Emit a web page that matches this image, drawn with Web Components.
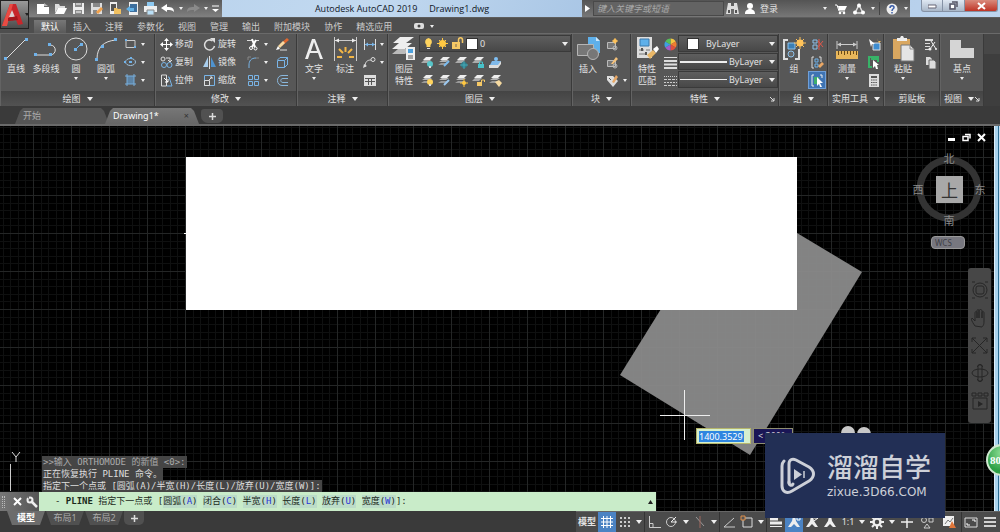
<!DOCTYPE html>
<html lang="zh-CN">
<head>
<meta charset="utf-8">
<title>Autodesk AutoCAD 2019 - Drawing1.dwg</title>
<style>
html,body{margin:0;height:100%;background:#000;overflow:hidden}
body{font:9px/12px "Noto Sans","Noto Sans CJK SC",sans-serif;color:#e2e2e2}
</style>
</head>
<body>
<cad-app></cad-app>
<script>
const LAYERS = '<path d="M5 1h7l-3 3H2z" fill="#eee"/><path d="M3 4h7l-3 3H0z" fill="#aaa"/>';
const SHEETS = '<path d="M5 1h7l-3 3H2z" fill="#eee"/><path d="M4 4h7l-3 2H1z" fill="#b5b5b5"/><path d="M3 7h7l-3 2H0z" fill="#999"/>';
const ICONS = {
  line:[26,26,'<path d="M3 23 23 3" stroke="#ddd"/><path d="M1 21h3v3H1zM22 2h3v3h-3z" fill="#6fb2ea"/>'],
  pline:[26,26,'<path d="M2 19h15c7 0 7-10 0-10" stroke="#ddd" fill="none"/><path d="M1 17h3v3H1zM16 17h3v3h-3zM15 7h3v3h-3z" fill="#6fb2ea"/>'],
  circle:[26,26,'<circle cx="13" cy="13" r="11" stroke="#ddd" fill="none"/><path d="m13 13 5-5" stroke="#6fb2ea"/><path d="M11 12h3v3h-3zM17 7h3v3h-3z" fill="#6fb2ea"/>'],
  arc:[26,26,'<path d="M4 23C4 11 11 5 23 4" stroke="#ddd" fill="none"/><path d="M2 22h3v3H2zM8 9h3v3H8zM21 2h3v3h-3z" fill="#6fb2ea"/>'],
  rect:[13,12,'<path d="M2 2.500h9v7H2z" stroke="#ccc" fill="none"/><path d="M1 1h2v2H1zM10 8h2v2h-2z" fill="#6fb2ea"/>'],
  ellipse:[13,12,'<ellipse cx="6.500" cy="6" rx="5" ry="3.500" stroke="#9cc0dc" fill="none"/><path d="M5 5h3v2H5zM6 1h2v2H6zM0 5h2v2H0z" fill="#6fb2ea"/>'],
  hatch:[13,12,'<path d="M3 2h7v8H3z" fill="#5d84a6"/><path d="M1 2h11M1 10h11M3 0v12M10 0v12" stroke="#79aedb"/>'],
  move:[13,13,'<path d="M6.500 1v11M1 6.500h11" stroke="#fff"/><path d="m6.500 0 2.500 3H4zM6.500 13 4 10h5zM0 6.500 3 4v5zM13 6.500 10 4v5z" fill="#fff"/>'],
  rotate:[13,13,'<path d="M9.500 2.800A5 5 0 1 0 11.500 8" stroke="#ddd" stroke-width="1.500" fill="none"/><path d="M7 0h5v5z" fill="#ddd"/>'],
  copy:[13,13,'<circle cx="3" cy="3" r="2" stroke="#ddd" fill="none"/><circle cx="4" cy="9" r="2.500" stroke="#79b4e6" fill="none"/><circle cx="9.500" cy="9" r="2.500" stroke="#79b4e6" fill="none"/><path d="M6 2h4v3m-2-1 2 2 2-2" stroke="#ddd" fill="none"/>'],
  mirror:[13,13,'<path d="M5 1v10H0z" fill="#a9cdec"/><path d="M8 1v10h5z" fill="#4f93cf"/><path d="M6.500 0v13" stroke="#ddd"/>'],
  stretch:[13,13,'<path d="M1.500 1v11h5V1z" stroke="#ddd" fill="none"/><path d="M8 3h1l3 9H7" stroke="#79b4e6" fill="none"/><path d="m4 4 4 4v-3M8 8H5" stroke="#fff" fill="none"/>'],
  scale:[13,13,'<path d="M1.500 1.500h10v10h-10z" stroke="#79b4e6" fill="none"/><path d="M1.500 6.500h5v5h-5z" stroke="#ddd" fill="none"/><path d="m6 6 3-3M7 3h2v2" stroke="#ddd" fill="none"/>'],
  trim:[13,13,'<path d="M0 2.500h5M8 2.500h4" stroke="#ddd"/><path d="m5 1 3 8M9 2 5 9" stroke="#fff" stroke-width="2"/><circle cx="4" cy="10" r="1.500" stroke="#fff" fill="none"/><circle cx="8.500" cy="10.500" r="1.500" stroke="#fff" fill="none"/>'],
  fillet:[13,13,'<path d="M2 12V9c0-4 2-7 7-7" stroke="#79b4e6" fill="none"/><path d="M1 4V1h3M9 2h3" stroke="#888" fill="none"/>'],
  array:[13,13,'<path d="M1.500 1.500h4v4h-4zM7.500 1.500h4v4h-4zM1.500 7.500h4v4h-4z" stroke="#79b4e6" fill="none"/><path d="M7.500 7.500h4v4h-4z" stroke="#79b4e6" fill="none"/>'],
  erase:[14,13,'<path d="m12 0 2 2-7 6-2-2z" fill="#e0682f"/><path d="m8 3 2 2-5 5-2-2z" fill="#f7d9a0"/><path d="m3 8 2 3-4 1z" fill="#fff"/><path d="M5 12h7" stroke="#ddd"/>'],
  explode:[13,13,'<path d="M1.500 4.500h7v7h-7zM4 1.500h7.500V9M1.500 4 4 1.500M8.500 4.500l3-3M8.500 11.500l3-3" stroke="#79b4e6" fill="none"/>'],
  offset:[13,13,'<path d="M12 1.500H6c-6 0-6 10 0 10h6M12 4.500H7c-3 0-3 4 0 4h5" stroke="#8ab8dd" fill="none"/>'],
  text:[26,26,'<path d="M4 23 11 3h3l8 20h-3l-2-6H9l-2 6zM10 15h6L13 6z" fill="#eee" fill-rule="evenodd"/>'],
  dim:[28,28,'<path d="M3.500 2v24M25.500 2v24M4 5.500h21" stroke="#ccc"/><path d="m4 5.500 4-2v4zM25 5.500l-4-2v4z" fill="#eee"/><path d="M6 22h5M18 22h5M8 14l4 4M21 14l-4 4M14.500 12v5" stroke="#f3b646" stroke-width="2"/>'],
  dimlin:[13,13,'<path d="M1.500 1v11M12.500 1v11" stroke="#ddd"/><path d="M2 6.500h10" stroke="#79b4e6"/><path d="m2 6.500 3-2v4zM12 6.500l-3-2v4z" fill="#79b4e6"/>'],
  leader:[13,13,'<path d="M2 11c0-5 2-7 6-7" stroke="#ddd" fill="none"/><circle cx="10" cy="3.500" r="2" stroke="#ddd" fill="none"/><path d="m0 12 1-4 3 2z" fill="#ddd"/>'],
  table:[13,13,'<path d="M1 1h12v11H1z" fill="#ddd"/><path d="M2 4.500h10M2 7.500h10M5.500 4v7M8.500 4v7" stroke="#555"/>'],
  layers:[26,28,'<path d="M9 2h14l-8 6H2zM8 8h13l-7 6H1z" fill="#eee"/><path d="M7 14h13l-6 5H1z" fill="#bbb"/><path d="M15 12h9v13h-9z" fill="#eee"/><path d="M17 14h5v4h-5z" fill="#4da1dd"/><path d="M17 21h5M17 23h5" stroke="#555"/>'],
  bulb:[11,13,'<path d="M5.500 1a4 4 0 0 0-2 7v2h4V8a4 4 0 0 0-2-7z" fill="#ffd45e"/><path d="M4 11.500h3" stroke="#ddd"/>'],
  sun:[13,13,'<circle cx="6.500" cy="6.500" r="3.500" fill="#ffc843"/><path d="M6.500 1v11M1 6.500h11M3 3l7 7M10 3l-7 7" stroke="#ffc843"/>'],
  unlock:[13,13,'<path d="M1 5h8v7H1z" fill="#f5c865"/><path d="M7.500 5V3c0-3 4-3 4 0v3" stroke="#f5c865" fill="none" stroke-width="1.500"/><path d="M5 7v3" stroke="#765"/>'],
  l1:[13,13,LAYERS+'<circle cx="9" cy="8" r="3" fill="#57c5c9"/><path d="M8 10h2v2H8z" fill="#ddd"/>'],
  l2:[13,13,SHEETS+'<path d="m6 10 5-5" stroke="#7bbcf0" stroke-width="2"/>'],
  l3:[13,13,LAYERS+'<circle cx="9" cy="9" r="3" fill="#2d7f8c"/><path d="M9 5v8M5 9h8" stroke="#48a6b2"/>'],
  l4:[13,13,LAYERS+'<path d="M6 8h6v4H6z" fill="#48c1c9"/><path d="M7.500 8V6h3v2" stroke="#48c1c9" fill="none"/>'],
  l5:[13,13,'<path d="M3 5h9l-3 6H0z" fill="#7fb9ea"/><path d="M0 9h9l3-4v3l-3 4H0z" fill="#ddd"/><circle cx="7" cy="3" r="2" fill="#7fc0f5"/>'],
  l6:[13,13,SHEETS+'<circle cx="9" cy="8" r="3" fill="#ffd45e"/><path d="M8 10h2v2H8z" fill="#ddd"/>'],
  l7:[13,13,SHEETS+'<path d="m6 11 5-5" stroke="#9dc9f0" stroke-width="2"/>'],
  l8:[13,13,SHEETS+'<circle cx="9" cy="9" r="2" fill="#ffc843"/><path d="M9 5v8M5 9h8" stroke="#ffc843"/>'],
  l9:[13,13,LAYERS+'<path d="M5 8h5v4H5z" fill="#f5c865"/><path d="M9.500 8V6h3v2" stroke="#f5c865" fill="none"/>'],
  l10:[13,13,SHEETS+'<path d="m6 8 4-2 3 3-3 4z" fill="#f5d9a0"/>'],
  insert:[26,28,'<path d="M13 2h8l4 4v12H13z" fill="#5fb0ea"/><path d="m21 2 4 4h-4z" fill="#cde8fb"/><path d="M2.500 9.500h16v11h-16z" fill="#777" stroke="#b5b5b5"/><circle cx="18" cy="19" r="5.500" fill="#777" stroke="#b5b5b5"/>'],
  b1:[13,13,'<path d="M1.500 4.500h8v6h-8z" fill="#777" stroke="#bbb"/><circle cx="9" cy="10" r="2" stroke="#bbb" fill="none"/><circle cx="9" cy="3" r="2" fill="#ffc35a"/><path d="M9 0v6M6 3h6" stroke="#ffc35a"/>'],
  b2:[13,13,'<path d="M1.500 4.500h8v6h-8z" fill="#777" stroke="#bbb"/><circle cx="9" cy="10" r="2" stroke="#bbb" fill="none"/><path d="m5 8 5-7 2 2-5 5z" fill="#f5c27a"/>'],
  b3:[13,13,'<path d="M1 2h6l5 5-5 6-6-7z" fill="#ddd"/><path d="m3 4 2 2" stroke="#555"/><path d="m6 8 4-7 2 2-4 6z" fill="#e8a765"/>'],
  match:[26,28,'<path d="M3 2h15v21H3z" fill="#ddd"/><path d="M6 4h9v7H6z" fill="#5fb0ea" stroke="#3b78ab"/><path d="M5 15h5M12 15h4M5 19h8" stroke="#777"/><path d="M7 13h2v3H7zM11 17h2v3h-2z" fill="#555"/><path d="m13 20 6-5 3 3-6 6z" fill="#e9b767"/><path d="m19 14 4-3 2 3-3 4z" fill="#fff"/>'],
  wheel:[13,13,'<path d="M6.500 6.500V.5a6 6 0 0 1 5.200 3z" fill="#f4c542"/><path d="m6.500 6.500 5.200-3a6 6 0 0 1 0 6z" fill="#ee7d31"/><path d="m6.500 6.500 5.200 3a6 6 0 0 1-5.200 3z" fill="#e0503f"/><path d="M6.500 6.500v6a6 6 0 0 1-5.200-3z" fill="#a55bc9"/><path d="m6.500 6.500-5.200 3a6 6 0 0 1 0-6z" fill="#3f9fe0"/><path d="m6.500 6.500-5.200-3A6 6 0 0 1 6.500.5z" fill="#55bd5a"/>'],
  weights:[13,13,'<path d="M0 1.500h13" stroke="#ddd"/><path d="M0 5h13M0 8.500h13" stroke="#ddd" stroke-width="2"/><path d="M0 12h13" stroke="#ddd" stroke-width="2"/>'],
  ltypes:[13,13,'<path d="M0 2.500h13" stroke="#ccc" stroke-dasharray="1 1"/><path d="M0 5.500h13M0 11.500h13" stroke="#ccc" stroke-dasharray="3 1"/><path d="M0 8.500h13" stroke="#ccc" stroke-dasharray="2 1"/>'],
  group:[26,28,'<path d="M7 5H3v19h4M14 24h4V14" stroke="#ddd" stroke-width="2" fill="none"/><path d="M7 8h7v6H7z" fill="#3b7fb5" stroke="#8dc1ea"/><circle cx="10" cy="19" r="3" fill="#666" stroke="#8dc1ea"/><circle cx="19" cy="8" r="3.500" fill="#ffc35a"/><path d="M19 2v12M13 8h12M15 4l8 8M23 4l-8 8" stroke="#ffc35a"/>'],
  g1:[13,13,'<path d="M2 2h4v3H2zM2 7h4v4H2z" stroke="#8dc1ea" fill="none"/><path d="M8 1v11M7 3l5 6M12 3 7 9" stroke="#e0584b"/>'],
  g2:[13,13,'<path d="M3 1H1v11h2M8 1h2v5" stroke="#ddd" fill="none"/><path d="M4 3h3v3H4zM4 8h3v3H4z" stroke="#6fb2ea" fill="none"/><path d="m7 10 4-4 2 2-4 4z" fill="#e9a765"/>'],
  g3:[15,15,'<path d="M4 2H2v11h2M10 2h2v3" stroke="#eee" fill="none"/><path d="M4 4h5v7H4z" fill="#3fae6b"/><path d="m7 4 6 6-3 0 2 4-2 0-1-3-2 2z" fill="#fff"/>'],
  measure:[26,28,'<path d="M3 6v8M23 6v8M4 9.500h18" stroke="#ccc"/><path d="m3 9.500 4-2v4zM23 9.500l-4-2v4z" fill="#ccc"/><path d="M2 16h22v8H2z" fill="#e9b75a"/><path d="M4.500 16v4M7.500 16v3M10.500 16v4M13.500 16v3M16.500 16v4M19.500 16v3M22.500 16v4" stroke="#6a4a16"/>'],
  u1:[13,13,'<path d="M5 5h7v7H5z" fill="#3f8dd0" stroke="#ddd"/><path d="m1 1 6 5-3 0-1 3z" fill="#fff"/><path d="m9 0 1 3 3 0-2 2" fill="#ffc35a"/>'],
  u2:[13,13,'<path d="M11 1H1v10h3M3 3h7v3" stroke="#38b368" stroke-width="2" fill="none"/><path d="m5 4 6 5-2 0 1 4-2 0-1-3-2 2z" fill="#fff"/>'],
  calc:[12,13,'<path d="M1 0h10v13H1z" fill="#ddd"/><path d="M3 2h6v2H3z" fill="#555"/><path d="M3 6h6M3 8.500h6M3 11h6" stroke="#555" stroke-dasharray="1.500 .7"/>'],
  paste:[26,28,'<path d="M3 4h17v20H3z" fill="#d9a760"/><path d="M7 6V3h3l1-2h2l1 2h3v3z" fill="#eee"/><path d="M11 10h9l4 4v12H11z" fill="#e5e5e5" stroke="#777"/><path d="M20 10v4h4" stroke="#888" fill="none"/>'],
  cut:[13,13,'<path d="M1 1h8v2H1zM1 5h5v1H1zM1 8h5v1H1zM1 11h6v1H1z" fill="#ddd"/><path d="m7 3 5 8M11 4l-5 7" stroke="#eee"/><circle cx="6" cy="11" r="1.500" fill="#eee"/><circle cx="12" cy="11" r="1" fill="#eee"/>'],
  dup:[13,13,'<path d="M2 1h4l2 2v6H2z" fill="#ddd"/><path d="M5 4h5l2 2v7H5z" fill="#ddd" stroke="#666"/>'],
  base:[26,28,'<path d="M1 5h11v8h13v10H1z" fill="#d5d5d5"/>'],
  qnew:[13,13,'<path d="M1 2h7v3h5v7H1z" fill="#fff"/><path d="m8 1 4 3H8z" fill="#bbb"/>'],
  qopen:[13,13,'<path d="M1 11V2h4l1 2h5v2H4z" fill="#ddd"/><path d="M4 6h9l-3 6H1z" fill="#fff"/>'],
  qsave:[13,13,'<path d="M1 1h11v11H1z" fill="#eee"/><path d="M3 1h7v4H3zM3 8h7v4H3z" fill="#8b8b8b"/><path d="M4 2h5M4 10h5" stroke="#fff"/>'],
  qsaveas:[13,13,'<path d="M1 1h11v11H1z" fill="#ddd"/><path d="M3 1h7v4H3zM3 8h4v4H3z" fill="#888"/><path d="m6 10 5-5 2 2-5 5z" fill="#f0a04a"/>'],
  qweb:[13,13,'<path d="M2 0h7v12H2z" fill="#eee"/><path d="M3 2h5v7H3z" fill="#555"/><path d="M6 6h3l1 1h3v5H6z" fill="#f0c060"/>'],
  qmob:[13,13,'<path d="M3 0h9v13H3z" fill="#eee"/><path d="M4 2h7v8H4z" fill="#3d6f9e"/><path d="m0 7 4-3v2h4v3H4v1z" fill="#64b2e6"/>'],
  qprint:[13,13,'<path d="M3 0h7v5H3z" fill="#8cc8f0"/><path d="M0 4h13v6H0z" fill="#eee"/><path d="M3 8h7v5H3z" fill="#b9def5" stroke="#888"/>'],
  undo:[14,13,'<path d="m0 6 6-4v3c5 0 7 1 7 5-2-2-4-2-7-2v2z" fill="#fff"/>'],
  redo:[14,13,'<path d="m14 6-6-4v3c-5 0-7 1-7 5 2-2 4-2 7-2v2z" fill="#8a8a8a"/>'],
  more:[9,10,'<path d="M1 2h7" stroke="#fff"/><path d="M1 5h7L4.500 8z" fill="#fff"/>'],
  drop:[6,4,'<path d="M0 0h6L3 4z" fill="#eee"/>'],
  sdrop:[4,3,'<path d="M0 0h4L2 3z" fill="#eee"/>'],
  launch:[6,6,'<path d="m1 1 4 4M5 2v3H2" stroke="#ddd" fill="none"/>'],
  play:[5,7,'<path d="m0 0 5 3.500L0 7z" fill="#fff"/>'],
  cam:[11,7,'<rect width="10" height="6" rx="2" fill="#ddd"/><circle cx="5" cy="3" r="1.500" fill="#444"/>'],
  binoc:[13,13,'<path d="M2 1h3v3h3V1h3l2 11H8V7H5v5H0z" fill="#ddd"/><path d="M2 8h2v3H2zM9 8h2v3H9z" fill="#555"/>'],
  person:[12,13,'<circle cx="6" cy="4" r="3" fill="#fff"/><path d="M1 12c0-4 2-4 4-5h2c2 1 4 1 4 5z" fill="#fff"/>'],
  cart:[12,12,'<path d="M0 2h2l2 6h6" stroke="#fff" fill="none"/><path d="M3 3h9l-2 4H4z" fill="#fff"/><circle cx="5" cy="10" r="1.300" fill="#fff"/><circle cx="9" cy="10" r="1.300" fill="#fff"/>'],
  tri:[12,12,'<path d="m6 2 4 8H2z" stroke="#ddd" fill="none" stroke-width="1.500"/><circle cx="6" cy="2.500" r="2" fill="#fff"/><circle cx="2" cy="9.500" r="2" fill="#fff"/><circle cx="10" cy="9.500" r="2" fill="#fff"/>'],
  help:[12,12,'<circle cx="6" cy="6" r="5.500" fill="#eee"/><path d="M4 5c0-3 4-3 4-.5C8 6 6 5.500 6 8M6 9v1.500" stroke="#3a5da8" stroke-width="1.500" fill="none"/>'],
  appa:[24,24,'<path d="M9 1h6l7 20-5 1-2-5-8 1-2 5H1z" fill="#c8262b"/><path d="M9 1h3L6 23H1z" fill="#e94b43"/><path d="m11 7 3 7H8z" fill="#ddd0d0"/><path d="m7 15 9-2 1 4-10 1z" fill="#a3171d"/>'],
  wmin:[9,6,'<path d="M0 2h8v3H0z" fill="#fff" stroke="#667"/>'],
  wmax:[9,9,'<path d="M3 1h5v5M1 3h5v5H1z" stroke="#556" stroke-width="1.500" fill="none"/><path d="M2 4h3v3H2z" fill="#fff"/>'],
  wclose:[9,8,'<path d="m1 1 7 6M8 1 1 7" stroke="#fff" stroke-width="2"/>'],
  close:[9,9,'<path d="m1 1 7 7M8 1 1 8" stroke="#fff" stroke-width="2"/>'],
  mmin:[9,9,'<path d="M1 5h7v3H1z" fill="#fff"/>'],
  mmax:[9,9,'<path d="M3 1.500h5v4M1 3.500h5v4H1z" stroke="#fff" stroke-width="1.500" fill="none"/>'],
  wrench:[12,12,'<path d="m5 5 6 6" stroke="#eee" stroke-width="2.500"/><circle cx="4" cy="4" r="2.500" stroke="#eee" stroke-width="2" fill="none"/><path d="M0 0h3v3z" fill="#666"/>'],
  plus:[9,9,'<path d="M4.500 1v7M1 4.500h7" stroke="#ddd" stroke-width="1.500"/>'],
  sgrid:[14,14,'<path d="M3.500 1v12M7 1v12M10.500 1v12M1 3.500h12M1 7h12M1 10.500h12" stroke="#fff"/>'],
  ssnap:[12,12,'<path d="M1 2h10M1 6h10M1 10h10" stroke="#ccc" stroke-width="2" stroke-dasharray="2 2"/>'],
  ortho:[14,14,'<path d="M2.500 1v11.500H14M2.500 8.500H6v4" stroke="#ccc" fill="none"/>'],
  polar:[14,14,'<circle cx="6" cy="7" r="4.500" stroke="#ccc" fill="none"/><path d="M6 7h6M6 7l5-5" stroke="#eee"/>'],
  iso:[14,14,'<path d="M3 2l8 9" stroke="#999"/><path d="M7 1v12" stroke="#a0685e"/>'],
  angle:[14,14,'<path d="M12 3 2 12h11" stroke="#ccc" fill="none"/>'],
  osnap:[14,14,'<path d="M3 3h9v9H3z" stroke="#ddd" fill="none"/><path d="M1 1h4v4H1z" stroke="#df8f4a" fill="#555"/>'],
  lw:[14,14,'<path d="M1 4h8M1 8h12" stroke="#eee" stroke-width="3"/><path d="M1 11.500h12" stroke="#eee"/>'],
  ann:[14,14,'<path d="M6 1h2l1 5 4 6h-3L7 9l-3 3H1l4-6z" fill="#eee"/><path d="M10 2h3v3h-3z" stroke="#fff" fill="none"/>'],
  ann2:[14,14,'<path d="M6 1h2l1 5 4 6h-3L7 9l-3 3H1l4-6z" fill="#eee"/><path d="m9 6 4-3M9 3h4" stroke="#fff"/>'],
  ann3:[14,14,'<path d="M6 1h2l1 5 4 6h-3L7 9l-3 3H1l4-6z" fill="#eee"/>'],
  gear:[14,14,'<circle cx="7" cy="7" r="3.500" stroke="#eee" stroke-width="2.500" fill="none"/><path d="M7 0v3M7 11v3M0 7h3M11 7h3M2 2l2 2M10 10l2 2M12 2l-2 2M4 10l-2 2" stroke="#eee" stroke-width="2"/>'],
  bigplus:[14,14,'<path d="M7 1v12M1 7h12" stroke="#eee" stroke-width="1.500"/>'],
  isol:[14,14,'<circle cx="4" cy="5" r="2.500" stroke="#ccc" fill="none"/><path d="M9 3h4v4H9zM7 9l3 4H4z" stroke="#ccc" fill="none"/>'],
  hw:[15,14,'<path d="M1 1h11v10H1z" fill="#eee"/><path d="m3 9 3-4 2 2 3-4" stroke="#777" fill="none"/><path d="m10 6 4 7H7z" fill="#e0763a"/>'],
  full:[14,14,'<path d="M1 3h12v9H1z" stroke="#ddd" fill="none"/><path d="M8 5h3v2M3 8v2h3" stroke="#fff" fill="none"/>'],
  ham:[14,14,'<path d="M1 3h12M1 7h12M1 11h12" stroke="#fff" stroke-width="1.500"/>'],
  navwheel:[20,20,'<circle cx="10" cy="10" r="7" stroke="#262626" fill="none"/><rect x="6" y="6" width="8" height="8" rx="2" stroke="#262626" fill="none"/><path d="M2 2h3M15 2h3M2 18h3M15 18h3" stroke="#262626"/>'],
  navhand:[20,20,'<path d="M5 18c-4-6-4-7-3-8l3 3V5c0-2 2-2 2 0v5V3c0-2 2-2 2 0v7-7c0-2 3-2 3 0v7-5c0-2 2-2 2 0v8c0 4-1 5-2 6z" stroke="#262626" fill="none"/>'],
  navzoom:[20,20,'<path d="m2 2 15 15M17 2 2 17M2 6V2h4M13 2h4v4M2 13v4h4M17 13v4h-4" stroke="#262626" fill="none"/>'],
  navorbit:[20,20,'<ellipse cx="10" cy="10" rx="8" ry="4" stroke="#262626" fill="none"/><path d="M8 2h4v16H8zM7 4l3-3 3 3M7 16l3 3 3-3" stroke="#262626" fill="none"/>'],
  navshow:[20,20,'<path d="M2 2h4v3H2zM8 2h4v3H8zM14 2h4v3h-4zM3 7h14v11H3z" stroke="#262626" fill="none"/><path d="m8 10 5 3-5 3z" fill="#262626"/>']
};

/* Registers an element whose shadow root is built from its attributes. */
const BASE = ':host{display:block;box-sizing:border-box}:host([hidden]){display:none}*{box-sizing:border-box}button,select,input{font:inherit;color:inherit;border:0;margin:0;padding:0;background:none;border-radius:0;outline:0}button{display:flex;align-items:center;justify-content:center;cursor:pointer;white-space:nowrap}a{color:inherit;text-decoration:none}';
function define(tag, css, html) {
  customElements.define(tag, class extends HTMLElement {
    connectedCallback() {
      if (this.shadowRoot) return;
      const t = document.createElement('template');
      t.innerHTML = `<style>${BASE}${css}</style>` + (typeof html === 'function' ? html(this) : html);
      this.attachShadow({mode: 'open'}).append(t.content.cloneNode(true));
    }
  });
}
const at = (el, n) => el.getAttribute(n) || '';
const ic = n => `<cad-icon name="${n}"></cad-icon>`;

define('cad-icon', ':host{display:inline-flex;flex:none}svg{display:block}', el => {
  const [w, h, body] = ICONS[at(el, 'name')];
  return `<svg width="${w}" height="${h}" viewBox="0 0 ${w} ${h}" aria-hidden="true">${body}</svg>`;
});

define('big-tool', ':host{flex:none;width:var(--w,30px)}button{flex-direction:column;justify-content:flex-start;width:100%}i{display:flex;align-items:center;height:28px}span{line-height:12px}cad-icon.d{margin-top:2px}',
  el => `<button><i>${ic(at(el,'icon'))}</i>${at(el,'label').split(' ').map(s => `<span>${s}</span>`).join('')}${el.hasAttribute('drop') ? '<cad-icon class="d" name="sdrop"></cad-icon>' : ''}</button>`);

define('small-tool', ':host{display:flex;height:18px}:host([on]) .m{background:#3f74b3;box-shadow:inset 0 0 0 1px #6f9fd8}.m{height:18px}i{display:flex;width:var(--cell,18px);justify-content:center}.d{width:8px}',
  el => `<button class="m" aria-label="${at(el,'label') || at(el,'icon')}"><i>${ic(at(el,'icon'))}</i>${at(el,'label')}</button>${el.hasAttribute('drop') ? `<button class="d" aria-label="更多">${ic('sdrop')}</button>` : ''}`);

define('ribbon-panel', ':host{flex:none;width:var(--pw);border-right:1px solid #3a3a3a;border-left:1px solid #636363;display:flex;flex-direction:column}.b{display:flex;height:57px;padding-top:1px}.f{display:grid;grid-template-columns:1fr auto 1fr;align-items:center;height:15px;background:linear-gradient(#444,#525252)}.t{grid-column:2;gap:6px;font-size:9px}.l{justify-self:end;padding-right:3px}',
  el => `<div class="b"><slot></slot></div><div class="f"><button class="t">${at(el,'label')}${el.hasAttribute('nodrop') ? '' : ic('drop')}</button>${el.hasAttribute('launch') ? `<button class="l" aria-label="对话框">${ic('launch')}</button>` : ''}</div>`);

define('cad-select', ':host{display:flex;align-items:center;height:17px;margin-bottom:1px;border:1px solid #3a3a3a;background:linear-gradient(#5e5e5e,#484848);padding-right:2px}::slotted(*){flex:none}select{appearance:none;flex:1;min-width:0;height:15px;line-height:15px;font-size:9px}',
  el => `<slot></slot><select aria-label="${at(el,'label')}"><option>${at(el,'value')}</option></select>${ic('drop')}`);

define('quick-access', ':host{display:flex;align-items:center;width:193px;height:17px;padding-left:4px;background:linear-gradient(#5a5a5a,#808080)}button{height:17px;width:18px}.s{width:7px}.m{width:13px}',
  ['qnew','qopen','qsave','qsaveas','qweb','qmob','qprint','undo'].map(n => `<button aria-label="${n}">${ic(n)}</button>`).join('') +
  `<button class="s" aria-label="撤销列表">${ic('sdrop')}</button><button aria-label="重做">${ic('redo')}</button><button class="s" aria-label="重做列表">${ic('sdrop')}</button><button class="m" aria-label="自定义">${ic('more')}</button>`);

define('info-center', ':host{display:flex;align-items:center;height:17px;width:328px;background:linear-gradient(#545454,#777)}button{height:17px}input{width:131px;height:15px;padding-left:3px;background:#636363;border:1px solid #494949;font-style:italic}input::placeholder{color:#aaa;opacity:1}.p{width:11px}.b{width:17px}.u{gap:4px;width:78px;justify-content:flex-start;padding-left:3px}.c{width:20px}.s{width:12px}hr{margin:0;border:0;width:1px;height:13px;background:#444}.t{width:16px}.h{width:24px}',
  `<button class="p" aria-label="展开">${ic('play')}</button><input aria-label="搜索" placeholder="键入关键字或短语"><button class="b" aria-label="搜索">${ic('binoc')}</button><button class="u">${ic('person')}登录</button><button class="s" aria-label="账户">${ic('sdrop')}</button><button class="c" aria-label="商店">${ic('cart')}</button><button class="t" aria-label="应用">${ic('tri')}</button><button class="s" aria-label="应用列表">${ic('sdrop')}</button><hr><button class="h" aria-label="帮助">${ic('help')}</button>${ic('sdrop')}`);

define('window-buttons', ':host{display:flex;align-self:flex-start;margin:0 2px 0 11px;height:13px}button{width:22px;height:12px;border:1px solid #8592a5;border-top:0;background:linear-gradient(#dfe8f2,#a9b7c8);border-radius:0 0 0 3px}button+button{border-radius:0;border-left:0}.x{width:33px;background:linear-gradient(#d98a7c,#bf3426);border-radius:0 0 3px 0}',
  `<button aria-label="最小化">${ic('wmin')}</button><button aria-label="还原">${ic('wmax')}</button><button class="x" aria-label="关闭">${ic('wclose')}</button>`);

define('title-bar', ':host{display:flex;height:17px;background:linear-gradient(115deg,#b4cfea 0,#c2d9f0 35%,#a9c6e5 58%,#bcd4ee 100%)}h1{flex:1;display:flex;justify-content:center;gap:12px;margin:0;font:9px/17px "Open Sans","Noto Sans",sans-serif;color:#10161f;white-space:nowrap}',
  '<quick-access></quick-access><h1><span>Autodesk AutoCAD 2019</span><span>Drawing1.dwg</span></h1><info-center></info-center><window-buttons></window-buttons>');

define('ribbon-tabs', ':host{display:block;background:#4e4e4e;border-top:1px solid #5d5d5d}nav{display:flex;height:15px;padding:2px 0 0 5px}a{padding:0 7px;line-height:13px;height:13px;color:#ccc;white-space:nowrap}a.on{background:linear-gradient(#777,#5a5a5a);color:#fff}button{gap:5px;margin-left:15px}',
  '<nav><a class="on" href="#">默认</a>' + ['插入','注释','参数化','视图','管理','输出','附加模块','协作','精选应用'].map(s => `<a href="#">${s}</a>`).join('') + `<button aria-label="功能区显示">${ic('cam')}${ic('sdrop')}</button></nav>`);

define('app-button', ':host{height:29px;border:1px solid #222;background:linear-gradient(#9a9a9a,#4c4c4c)}button{width:100%;height:100%;justify-content:space-between}',
  `<button aria-label="应用程序菜单">${ic('appa')}<svg width="4" height="3" aria-hidden="true"><path d="M0 0h4L2 3z" fill="#222"/></svg></button>`);

define('cad-header', ':host{display:grid;grid-template-columns:29px 1fr;grid-template-rows:17px 16px;background:#4e4e4e}app-button{grid-row:1/3;z-index:1}',
  '<app-button></app-button><title-bar></title-bar><ribbon-tabs></ribbon-tabs>');

const st = (icon, label = '', drop = '') => `<small-tool icon="${icon}" label="${label}" ${drop}></small-tool>`;
define('cad-ribbon', `:host{display:flex;height:73px;background:#575757;border-top:1px solid #6a6a6a}
.col{display:flex;flex-direction:column}.mod{display:grid;grid-template-columns:43px 44px 29px 20px;grid-auto-rows:18px;padding-left:1px}
.lay{flex:1;min-width:0}.icons{display:grid;grid-template-columns:repeat(5,17px);grid-auto-rows:18px;--cell:17px}
.sw{width:12px;height:12px;background:#fff;border:1px solid #333}.st{display:flex;align-items:center;gap:2px;width:60px;padding-left:3px}.clr{margin:0 7px 0 8px}.props{flex:1;min-width:0}.ln{width:47px;height:2px;margin:0 2px 0 1px;background:#eee}.ln.t{height:1px}.col.p{--cell:16px}.end{flex:1;background:linear-gradient(#474747 0 20px,#3e3e3e 20px)}`,
`<ribbon-panel label="绘图" style="--pw:155px"><big-tool icon="line" label="直线"></big-tool><big-tool icon="pline" label="多段线"></big-tool><big-tool icon="circle" label="圆" drop></big-tool><big-tool icon="arc" label="圆弧" drop></big-tool><div class="col">${st('rect','','drop')}${st('ellipse','','drop')}${st('hatch','','drop')}</div></ribbon-panel>
<ribbon-panel label="修改" style="--pw:142px"><div class="mod">${st('move','移动')}${st('rotate','旋转')}${st('trim','','drop')}${st('erase')}${st('copy','复制')}${st('mirror','镜像')}${st('fillet','','drop')}${st('explode')}${st('stretch','拉伸')}${st('scale','缩放')}${st('array','','drop')}${st('offset')}</div></ribbon-panel>
<ribbon-panel label="注释" style="--pw:91px"><big-tool style="--w:32px" icon="text" label="文字" drop></big-tool><big-tool icon="dim" label="标注"></big-tool><div class="col">${st('dimlin','','drop')}${st('leader','','drop')}${st('table')}</div></ribbon-panel>
<ribbon-panel label="图层" style="--pw:184px"><big-tool icon="layers" label="图层 特性"></big-tool><div class="lay"><cad-select label="图层" value="0"><span class="st">${ic('bulb')}${ic('sun')}${ic('unlock')}<span class="sw"></span></span></cad-select><div class="icons">${[1,2,3,4,5,6,7,8,9,10].map(n => st('l'+n)).join('')}</div></div></ribbon-panel>
<ribbon-panel label="块" style="--pw:59px"><big-tool icon="insert" label="插入"></big-tool><div class="col">${st('b1')}${st('b2')}${st('b3','','drop')}</div></ribbon-panel>
<ribbon-panel label="特性" launch style="--pw:148px"><big-tool icon="match" label="特性 匹配"></big-tool><div class="col p">${st('wheel')}${st('weights')}${st('ltypes')}</div><div class="props"><cad-select label="对象颜色" value="ByLayer"><span class="sw clr"></span></cad-select><cad-select label="线宽" value="ByLayer"><span class="ln"></span></cad-select><cad-select label="线型" value="ByLayer"><span class="ln t"></span></cad-select></div></ribbon-panel>
<ribbon-panel label="组" style="--pw:49px"><big-tool style="--w:28px" icon="group" label="组"></big-tool><div class="col">${st('g1')}${st('g2')}${st('g3','','on')}</div></ribbon-panel>
<ribbon-panel label="实用工具" style="--pw:56px"><big-tool style="--w:36px" icon="measure" label="测量" drop></big-tool><div class="col">${st('u1')}${st('u2')}${st('calc')}</div></ribbon-panel>
<ribbon-panel label="剪贴板" nodrop style="--pw:56px"><big-tool style="--w:36px" icon="paste" label="粘贴" drop></big-tool><div class="col">${st('cut')}${st('dup')}</div></ribbon-panel>
<ribbon-panel label="视图" launch style="--pw:44px"><big-tool style="--w:42px" icon="base" label="基点" drop></big-tool></ribbon-panel>
<div class="end"></div>`);

define('file-tabs', ':host{display:flex;height:20px;padding:2px 0 0 15px;background:#3a3a3a;border-bottom:2px solid #6a6a6a}a{display:flex;align-items:center;justify-content:space-between;width:94px;margin-right:-4px;height:16px;padding:0 10px 0 8px;background:#555;color:#aaa;clip-path:polygon(0 100%,5px 3px,8px 0,86px 0,89px 3px,100% 100%)}a.on{background:linear-gradient(#777,#666);color:#fff}button{width:22px;height:14px;margin:1px 0 0 6px;background:#515151;border-radius:3px 4px 5px 7px}b{font:9px/12px "Noto Sans",sans-serif;color:#333}',
  `<a href="#">开始</a><a class="on" href="#">Drawing1*<b>×</b></a><button aria-label="新图形">${ic('plus')}</button>`);

define('view-cube', ':host{position:relative;width:74px;height:74px;color:#8a8a8a}svg{position:absolute;inset:0}b{position:absolute;font:11px/12px "Noto Sans CJK SC",sans-serif;width:12px;text-align:center}.n{top:0;left:31px}.s{bottom:0;left:31px}.w{top:31px;left:0}.e{top:31px;right:0}button{position:absolute;left:24px;top:24px;width:27px;height:27px;background:#a8a8a8;color:#333;font:17px/24px "Noto Sans CJK SC",sans-serif}',
  '<svg width="74" height="74" aria-hidden="true"><circle cx="37" cy="37" r="29" fill="none" stroke="#333" stroke-width="7"/></svg><b class="n">北</b><b class="w">西</b><b class="e">东</b><b class="s">南</b><button>上</button>');

define('nav-bar', ':host{display:flex;flex-direction:column;align-items:center;justify-content:space-between;width:23px;height:155px;padding:12px 0;border-radius:3px;background:#474747}button{width:20px;height:20px}',
  ['navwheel','navhand','navzoom','navorbit','navshow'].map(n => `<button aria-label="${n}">${ic(n)}</button>`).join(''));

define('command-log', ':host{display:flex;flex-direction:column;align-items:flex-start;font:9px/12px "DejaVu Sans Mono","Noto Sans CJK SC",monospace;color:#ddd;white-space:pre}span{background:#454545;padding:0 1px;height:12px}.o{color:#aaa}',
  '<span class="o">&gt;&gt;输入 ORTHOMODE 的新值 &lt;0&gt;:</span><span>正在恢复执行 PLINE 命令。</span><span>指定下一个点或 [圆弧(A)/半宽(H)/长度(L)/放弃(U)/宽度(W)]:</span>');

define('command-line', `:host{display:flex;height:19px;background:#c9ecc9;color:#1b2a1b;font:9px/19px "DejaVu Sans Mono","Noto Sans CJK SC",monospace}.g{display:flex;align-items:center;width:39px;background:linear-gradient(90deg,#777,#555)}.g i{width:3px;height:12px;margin:0 5px 0 2px;border:1px dotted #bbb}.g button{width:15px}label{white-space:pre;padding-left:16px}label button{display:inline;line-height:13px;background:#bcdcc8}u{text-decoration:none;color:#2a35d8}input{flex:1;min-width:0;height:19px}.d{width:10px;margin-right:1px}`,
  `<div class="g"><i></i><button aria-label="关闭">${ic('close')}</button><button aria-label="自定义">${ic('wrench')}</button></div><label for="cmd">- <b>PLINE</b> 指定下一点或 [${[['圆弧','A'],['闭合','C'],['半宽','H'],['长度','L'],['放弃','U'],['宽度','W']].map(([a,b]) => `<button>${a}(<u>${b}</u>)</button>`).join(' ')}]:</label><input id="cmd" aria-label="命令"><button class="d" aria-label="历史"><svg width="5" height="4"><path d="M0 4h5L2.500 0z" fill="#222"/></svg></button>`);

define('dynamic-input', ':host{display:flex;gap:2px;font:9px/12px "Noto Sans",sans-serif}label{display:flex;width:55px;height:16px;padding:2px 6px 2px 2px;border:1px solid #b6b66c;background:#d6f0cf}input{width:45px;height:11px;background:#2f86e0;color:#fff}output{width:40px;height:16px;padding:1px 4px;border:1px solid #8f8f72;background:#1a1656;color:#ddd;white-space:nowrap}',
  '<label><input aria-label="长度" value="1400.3529"></label><output>&lt; 300°</output>');

define('drawing-area', `:host{position:relative;flex:1;min-height:0;overflow:hidden;background:#000}
.scene{position:absolute;inset:0;width:100%;height:100%}.mdi{position:absolute;top:7px;right:11px;display:flex}.mdi button{width:15px;height:9px}
view-cube{position:absolute;right:14px;top:26px}.wcs{position:absolute;right:35px;top:110px;width:34px;height:13px;justify-content:flex-start;padding-left:3px;background:#77777f;border:1px solid #999;border-radius:4px;color:#3f3f46;font-size:8px;line-height:9px}
nav-bar{position:absolute;right:9px;top:142px}command-log{position:absolute;left:42px;bottom:19px}command-line{position:absolute;left:0;bottom:0;width:656px}dynamic-input{position:absolute;left:696px;top:302px}
.edge{position:absolute;right:0;top:0;bottom:0;width:6px;background:linear-gradient(90deg,#e0f0fa 0 1px,#a9d3ee 1px 4px,#2c6f94 4px 5px,#cde 5px)}`,
`<svg class="scene" aria-hidden="true"><defs><pattern id="g" x="185" y="31" width="38" height="38" patternUnits="userSpaceOnUse"><path d="M8.500 0v38M15.500 0v38M23.500 0v38M30.500 0v38M0 8.500h38M0 15.500h38M0 23.500h38M0 30.500h38" stroke="#0f1010"/><path d="M.5 0v38M0 .5h38" stroke="#242626"/></pattern></defs>
<rect width="100%" height="100%" fill="url(#g)"/>
<path d="m797 107 65 39-112 183-130-80 41-66z" fill="#8b8b8b" fill-opacity=".94"/>
<path d="M186 31h611v153H186z" fill="#fff"/><path d="M184 107.500h3" stroke="#fff"/>
<path d="M660 289.500h50M684.500 264v50" stroke="#eee"/>
<path d="M10.500 338v27" stroke="#ccc"/><path d="m12 326 4 5 4-5M16 331v5" stroke="#ddd" fill="none"/>
<circle cx="848" cy="307" r="7" fill="#c8c8c8"/><circle cx="864" cy="308" r="7" fill="#c8c8c8"/></svg>
<div class="mdi"><button aria-label="最小化">${ic('mmin')}</button><button aria-label="还原">${ic('mmax')}</button><button aria-label="关闭">${ic('close')}</button></div>
<view-cube></view-cube><button class="wcs">WCS</button><nav-bar></nav-bar><dynamic-input></dynamic-input><command-log></command-log><command-line></command-line><div class="edge"></div>`);

const sb = (n, c = '') => `<button class="${c}" aria-label="${n}">${ic(n)}</button>`;
const sd = `<button class="d" aria-label="选项">${ic('drop')}</button>`;
define('status-bar', `:host{display:flex;justify-content:space-between;height:21px;background:#3a3a3a}nav{display:flex;padding-left:7px;color:#aaa}nav a,nav button{height:14px;line-height:13px;text-align:center;width:38px;margin-right:1px;background:#505050;clip-path:polygon(0 0,100% 0,33px 100%,5px 100%)}nav a.on{background:#6c6c6c;color:#fff;font-weight:bold}nav button{width:20px;clip-path:none;border-radius:0 0 5px 5px}
.t{display:flex;background:#4b4b4b;border-top:1px solid #666}.t button{width:18px;height:20px}.t .on{background:#4b83c3}.t .m{width:22px;font-weight:bold}.t .d{width:10px}.t .w{width:20px}.t .x{width:24px}hr{width:1px;height:20px;margin:0;border:0;background:#333}`,
`<nav><a class="on" href="#">模型</a><a href="#">布局1</a><a href="#">布局2</a><button aria-label="新建布局">${ic('plus')}</button></nav>
<div class="t"><button class="m">模型</button>${sb('sgrid','on')}${sb('ssnap')}${sd}<hr>${sb('ortho')}${sb('polar')}${sd}${sb('iso')}${sd}<hr>${sb('angle')}${sb('osnap')}${sd}<hr>${sb('lw')}${sb('ann','on')}${sb('ann2')}${sb('ann3')}<button>1:1</button>${sd}${sb('gear','w')}${sd}${sb('bigplus','w')}${sb('isol','w')}${sb('hw','x')}<hr>${sb('full')}${sb('ham','w')}</div>`);

define('site-badge', ':host{display:flex;align-items:center;gap:12px;width:180px;height:85px;padding-left:15px;background:#222f55;color:#cdd0d8}svg{flex:none}p{margin:0}.a{font:500 26px/32px "Noto Sans CJK SC",sans-serif}.b{font:12px/20px "DejaVu Sans",sans-serif}',
  `<svg width="35" height="37" viewBox="0 0 35 37" aria-hidden="true"><path d="M9 26V7c0-4 3-6 7-4l13 7c6 4 6 10 0 14L12 34c-5 3-10 1-10-5V9c0-2 1-4 2-5" fill="none" stroke="#cdd0d8" stroke-width="3" stroke-linecap="round" stroke-linejoin="round"/><path d="M9 25c0 4 3 4 4 2" fill="none" stroke="#cdd0d8" stroke-width="3" stroke-linecap="round"/><path d="m14 12 8 5.500-8 5.500z" fill="#cdd0d8"/><path d="M24 14v7" stroke="#cdd0d8" stroke-width="1.500"/></svg><div><p class="a">溜溜自学</p><p class="b">zixue.3D66.COM</p></div>`);

define('score-ball', ':host{width:32px;height:32px;padding-left:2px;border-radius:50%;background:radial-gradient(circle at 50% 25%,#8fdf97,#2da045 70%);border:2px solid #cfe8d0;color:#fff;font:bold 11px/28px "Liberation Serif",serif}', '80');

define('cad-app', ':host{position:relative;display:flex;flex-direction:column;height:100vh;overflow:hidden}site-badge{position:absolute;right:55px;bottom:14px}score-ball{position:absolute;right:-18px;bottom:56px}',
  '<cad-header></cad-header><cad-ribbon></cad-ribbon><file-tabs></file-tabs><drawing-area></drawing-area><status-bar></status-bar><site-badge></site-badge><score-ball></score-ball>');
</script>
</body>
</html>
